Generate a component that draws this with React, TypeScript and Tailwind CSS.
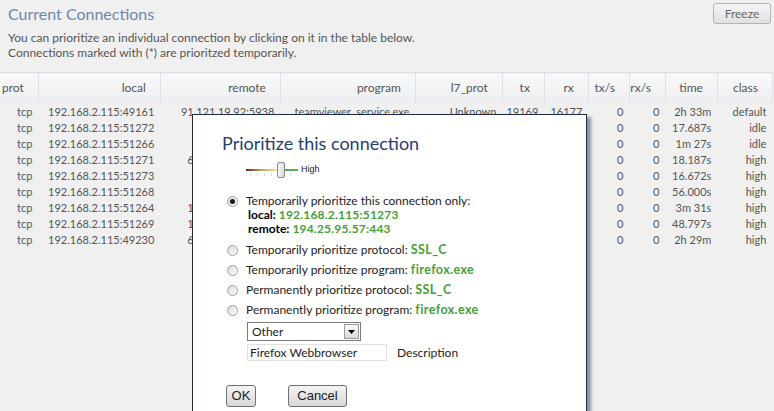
import React from "react";

type Row = string[];

const rows: Row[] = [
  ["tcp", "192.168.2.115:49161", "91.121.19.92:5938", "teamviewer_service.exe", "Unknown", "19169", "16177", "0", "0", "2h 33m", "default"],
  ["tcp", "192.168.2.115:51272", "74.125.79.99:80", "firefox.exe", "HTTP", "1234", "5678", "0", "0", "17.687s", "idle"],
  ["tcp", "192.168.2.115:51266", "74.125.43.91:80", "firefox.exe", "HTTP", "2345", "6789", "0", "0", "1m 27s", "idle"],
  ["tcp", "192.168.2.115:51271", "69.171.242.7:443", "firefox.exe", "SSL_C", "3456", "7890", "0", "0", "18.187s", "high"],
  ["tcp", "192.168.2.115:51273", "82.98.86.175:80", "firefox.exe", "SSL_C", "4567", "8901", "0", "0", "16.672s", "high"],
  ["tcp", "192.168.2.115:51268", "74.125.39.99:80", "firefox.exe", "HTTP", "5678", "9012", "0", "0", "56.000s", "high"],
  ["tcp", "192.168.2.115:51264", "173.194.69.9:443", "firefox.exe", "SSL_C", "6789", "1234", "0", "0", "3m 31s", "high"],
  ["tcp", "192.168.2.115:51269", "195.71.11.67:443", "firefox.exe", "SSL_C", "7890", "2345", "0", "0", "48.797s", "high"],
  ["tcp", "192.168.2.115:49230", "63.245.217.2:443", "firefox.exe", "SSL_C", "8901", "3456", "0", "0", "2h 29m", "high"],
];

const headers = ["prot", "local", "remote", "program", "l7_prot", "tx", "rx", "tx/s", "rx/s", "time", "class"];
const widths = ["w-[38px]", "w-[122px]", "w-[120px]", "w-[135px]", "w-[87px]", "w-[42px]", "w-[44px]", "w-[41px]", "w-[36px]", "w-[52px]", "w-[55px]"];

function Radio({ checked }: { checked?: boolean }) {
  return (
    <span className="w-[11px] h-[11px] rounded-full border border-[#a0a0a0] bg-gradient-to-br from-[#d6d6d6] to-[#ffffff] flex items-center justify-center shrink-0">
      {checked && <span className="w-[5px] h-[5px] rounded-full bg-[#1a1a1a]" />}
    </span>
  );
}

function Green({ children, wide }: { children: React.ReactNode; wide?: boolean }) {
  return (
    <span className={wide ? "text-[#45a035] font-bold text-[12.5px] tracking-[0.4px]" : "text-[#45a035] font-bold text-[12px] tracking-[0.2px]"}>
      {children}
    </span>
  );
}

function Slider() {
  return (
    <div className="relative w-[52px] h-[18px]">
      <div className="absolute left-0 top-[8px] w-[32px] h-[2px] bg-gradient-to-r from-[#6a1e1e] via-[#c9a76a] to-[#f2ec7a]" />
      <div className="absolute left-[38px] top-[8px] w-[14px] h-[2px] bg-[#5aa55a]" />
      {[4, 11, 18, 25, 44].map((x) => (
        <div key={x} className="absolute top-[12px] w-px h-[3px] bg-[#d8d8d8]" style={{ left: x }} />
      ))}
      <div className="absolute left-[31px] top-[1px] w-[8px] h-[16px] rounded-[2px] border border-[#8a8a8a] bg-gradient-to-r from-[#f4f4f4] to-[#dcdcdc]" />
    </div>
  );
}

function RadioRow({ children }: { children: React.ReactNode }) {
  return (
    <div className="flex items-center gap-[8px] h-[20px] leading-[14px]">
      <Radio />
      <span>{children}</span>
    </div>
  );
}

export default function App() {
  return (
    <div className="w-[774px] h-[411px] bg-[#f0f0f0] relative overflow-hidden font-['Lato',sans-serif] text-[#555]">
      <div className="flex justify-between items-start">
        <div className="pl-[8px] pt-[3px] text-[16px] leading-[22px] text-[#6d88a6]">Current Connections</div>
        <button className="mt-[3px] mr-[3px] w-[58px] h-[21px] rounded-[3px] border border-[#b4b4b4] bg-gradient-to-b from-[#f6f6f6] to-[#e0e0e0] text-[12px] text-[#666] leading-none">
          Freeze
        </button>
      </div>
      <div className="pl-[8px] pt-[5px] text-[12px] leading-[15px] text-[#555]">
        <div>You can prioritize an individual connection by clicking on it in the table below.</div>
        <div>Connections marked with (*) are prioritzed temporarily.</div>
      </div>
      <table className="mt-[12px] border-collapse table-fixed">
        <thead>
          <tr className="h-[30px] bg-gradient-to-b from-[#f8f9fa] to-[#eceef1] border-t border-[#dcdfe3] text-[12px]">
            {headers.map((h, i) => (
              <th key={h} className={`${widths[i]} font-normal text-right pr-[14px] text-[#555] border-r border-[#dde1e6] ${i === 0 ? "text-left pl-[2px]" : ""}`}>
                {h}
              </th>
            ))}
          </tr>
        </thead>
        <tbody className="text-[11px]">
          <tr className="h-[1px]"><td colSpan={11} /></tr>
          {rows.map((r, ri) => (
            <tr key={ri} className="h-[16px] leading-[16px]">
              {r.map((c, ci) => (
                <td key={ci} className="text-right pr-[6px] whitespace-nowrap overflow-hidden">
                  {c}
                </td>
              ))}
            </tr>
          ))}
        </tbody>
      </table>

      <div className="absolute left-[192px] top-[114px] w-[395px] h-[310px] bg-white border border-[#1c2a48] shadow-[4px_3px_3px_rgba(60,70,100,0.55)] text-[#222]">
        <div className="pl-[29px] pt-[17px] text-[18px] leading-[22px] text-[#1f3d73]">Prioritize this connection</div>
        <div className="flex items-center pl-[53px] mt-[7px]">
          <Slider />
          <span className="ml-[3px] text-[9px] font-['Liberation_Sans',sans-serif] text-[#222]">High</span>
        </div>
        <div className="pl-[34px] mt-[15px] text-[12px] leading-[14px]">
          <div className="flex items-center gap-[8px] h-[14px]">
            <Radio checked />
            <span>Temporarily prioritize this connection only:</span>
          </div>
          <div className="pl-[21px]">
            <div className="h-[14px] leading-[14px]"><span className="font-bold text-black">local: </span><Green>192.168.2.115:51273</Green></div>
            <div className="h-[14px] leading-[14px]"><span className="font-bold text-black">remote: </span><Green>194.25.95.57:443</Green></div>
          </div>
          <div className="flex flex-col mt-[4px]">
            <RadioRow>Temporarily prioritize protocol: <Green wide>SSL_C</Green></RadioRow>
            <RadioRow>Temporarily prioritize program: <Green wide>firefox.exe</Green></RadioRow>
            <RadioRow>Permanently prioritize protocol: <Green wide>SSL_C</Green></RadioRow>
            <RadioRow>Permanently prioritize program: <Green wide>firefox.exe</Green></RadioRow>
          </div>
          <div className="pl-[20px] mt-[2px]">
            <div className="w-[114px] h-[19px] border border-[#7a7a7a] flex items-center justify-between pl-[4px] pr-[1px]">
              <span className="text-[12px]">Other</span>
              <span className="w-[15px] h-[15px] border border-[#9a9a9a] bg-gradient-to-b from-[#fafafa] to-[#dadada] flex items-center justify-center">
                <svg width="7" height="4" viewBox="0 0 7 4"><path d="M0 0h7L3.5 4z" fill="#000" /></svg>
              </span>
            </div>
            <div className="flex items-center mt-[3px]">
              <div className="w-[140px] h-[17px] border border-[#e0e0e0] pl-[2px] text-[12px] leading-[15px]">Firefox Webbrowser</div>
              <span className="ml-[10px] text-[12px]">Description</span>
            </div>
          </div>
        </div>
        <div className="flex pl-[33px] mt-[24px] gap-[32px] font-['Liberation_Sans',sans-serif] text-[13px] text-[#222]">
          <button className="w-[30px] h-[22px] rounded-[3px] border border-[#707070] bg-gradient-to-b from-[#f4f4f4] to-[#d8d8d8]">OK</button>
          <button className="w-[59px] h-[22px] rounded-[3px] border border-[#707070] bg-gradient-to-b from-[#f4f4f4] to-[#d8d8d8]">Cancel</button>
        </div>
      </div>
    </div>
  );
}
